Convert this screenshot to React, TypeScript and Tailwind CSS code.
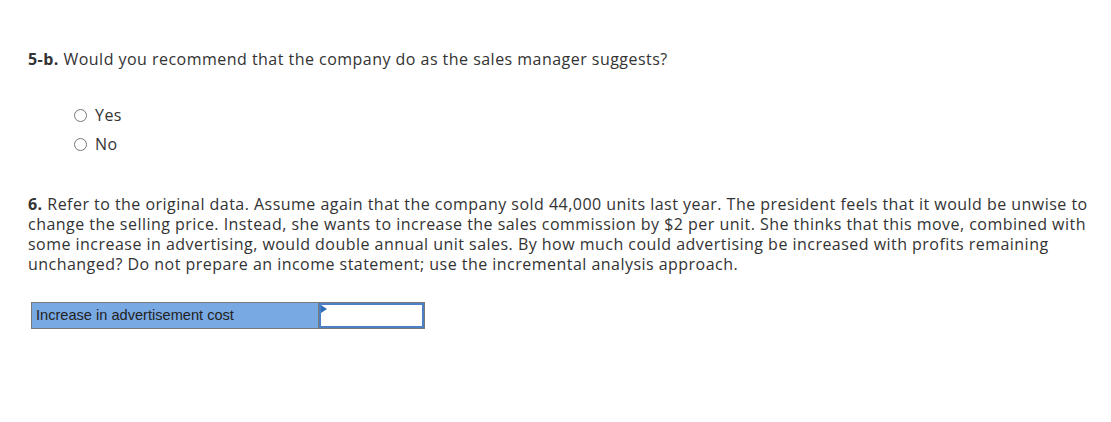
import React from 'react';

const font = { fontFamily: '"Open Sans", Lato, sans-serif', letterSpacing: '0.47px' };

export default function App() {
  return (
    <div className="w-[1111px] h-[422px] bg-white text-[#333] pl-[28px] pt-[49px]" style={font}>
      {/* Question 5-b */}
      <p className="text-[16px] leading-[20px]">
        <span className="font-bold">5-b.</span> Would you recommend that the company do as the sales manager suggests?
      </p>

      <div className="mt-[36px] ml-[46px] flex flex-col gap-[9px]">
        {['Yes', 'No'].map((opt) => (
          <label key={opt} className="flex items-center gap-[8px] text-[16px] leading-[20px]">
            <span className="w-[13px] h-[13px] rounded-full border border-[#767676] bg-white shrink-0" />
            {opt}
          </label>
        ))}
      </div>

      {/* Question 6 */}
      <p className="mt-[40px] text-[16px] leading-[20px] w-[1075px]">
        <b>6.</b> Refer to the original data. Assume again that the company sold 44,000 units last year. The president feels that it would be unwise to change the selling price. Instead, she wants to increase the sales commission by $2 per unit. She thinks that this move, combined with some increase in advertising, would double annual unit sales. By how much could advertising be increased with profits remaining unchanged? Do not prepare an income statement; use the incremental analysis approach.
      </p>

      <div className="mt-[28px] ml-[3px] flex w-[394px] h-[27px] border border-[#7a7a7a]">
        <div
          className="w-[287px] bg-[#79a9e3] border-r border-[#7a7a7a] px-[4px] flex items-center text-[14.6px] text-[#222]"
          style={{ fontFamily: '"Liberation Sans", Arial, sans-serif', letterSpacing: 0 }}
        >
          Increase in advertisement cost
        </div>
        <div className="relative flex-1 border-2 border-[#4c7fc4] bg-white">
          <span className="absolute left-0 top-0 w-0 h-0 border-t-[4px] border-b-[4px] border-l-[6px] border-t-transparent border-b-transparent border-l-[#2f6db8]" />
        </div>
      </div>
    </div>
  );
}
